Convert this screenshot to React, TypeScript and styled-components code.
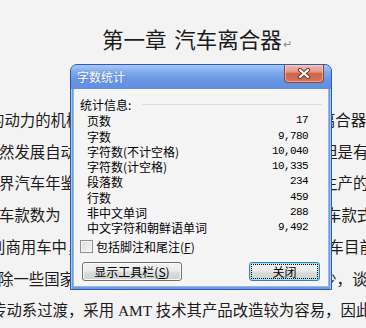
import React from "react";
import styled, { createGlobalStyle } from "styled-components";

const GlobalStyle = createGlobalStyle`
  html, body {
    margin: 0;
    padding: 0;
  }
  body {
    background: #f3f3f3;
    font-family: "Noto Sans CJK SC", sans-serif;
  }
`;

const stats = [
  { label: "页数", value: "17" },
  { label: "字数", value: "9,780" },
  { label: "字符数(不计空格)", value: "10,040" },
  { label: "字符数(计空格)", value: "10,335" },
  { label: "段落数", value: "234" },
  { label: "行数", value: "459" },
  { label: "非中文单词", value: "288" },
  { label: "中文字符和朝鲜语单词", value: "9,492" },
];

const lines = [
  { indent: -11, text: "的动力的机械，在其传动系统中都必须装有一个  离合器" },
  { indent: -1, text: "然发展自动变速器的技术已经相当成熟和完善，但是有" },
  { indent: -1, text: "界汽车年鉴》的统计，世界各大汽车公司目前所生产的" },
  { indent: -1, text: "车款数为　2158 种，其中装有各类自动变速器的车款式" },
  { indent: -10, text: "别商用车中，自动变速器的装车率更高。而我国汽车目前" },
  { indent: -2, text: "除一些国家装备率较高外，我国轿车上的应用很少，谈到" },
  { indent: -9, text: "传动系过渡，采用 AMT 技术其产品改造较为容易，因此" },
];

export default function App() {
  return (
    <Page>
      <GlobalStyle />
      <Doc>
        <Heading>
          第一章 汽车离合器<Mark>↵</Mark>
        </Heading>
        {lines.map((l, i) => (
          <Line key={i} $indent={l.indent}>
            {l.text}
          </Line>
        ))}
      </Doc>

      <Window>
        <TitleBar>
          <Title>字数统计</Title>
          <CloseButton aria-label="关闭">
            <svg width="14" height="11" viewBox="0 0 14 11">
              <path d="M3 2 L11 9 M11 2 L3 9" stroke="#6b3327" strokeWidth="4.2" strokeLinecap="round" />
              <path d="M3 2 L11 9 M11 2 L3 9" stroke="#fff" strokeWidth="2.2" strokeLinecap="round" />
            </svg>
          </CloseButton>
        </TitleBar>
        <Body>
          <GroupHeader>
            <span>统计信息:</span>
            <Rule />
          </GroupHeader>
          <StatList>
            {stats.map((s) => (
              <React.Fragment key={s.label}>
                <StatLabel>{s.label}</StatLabel>
                <StatValue>{s.value}</StatValue>
              </React.Fragment>
            ))}
          </StatList>
          <CheckRow>
            <CheckBox />
            <span>
              包括脚注和尾注(<u>F</u>)
            </span>
          </CheckRow>
          <ButtonRow>
            <Button $width={100}>
              显示工具栏(<u>S</u>)
            </Button>
            <Button $width={71} $default>
              <FocusRing>关闭</FocusRing>
            </Button>
          </ButtonRow>
        </Body>
      </Window>
    </Page>
  );
}

const Page = styled.div`
  position: relative;
  width: 366px;
  height: 328px;
  overflow: hidden;
  background: #f3f3f3;
`;

const Doc = styled.div`
  padding-top: 23px;
  font-family: "Liberation Serif", "Noto Sans CJK SC", serif;
  color: #1b1b1b;
`;

const Heading = styled.h1`
  margin: 0 0 46px 102px;
  font-family: "Noto Sans CJK SC", sans-serif;
  font-size: 21.5px;
  font-weight: 400;
  line-height: 32px;
  word-spacing: 3px;
  white-space: nowrap;
`;

const Mark = styled.span`
  font-size: 11px;
  color: #8a8a8a;
  margin-left: 1px;
`;

const Line = styled.p<{ $indent: number }>`
  margin: 0 0 0 ${(p) => p.$indent}px;
  font-size: 15.4px;
  line-height: 31.7px;
  white-space: pre;
`;

const Window = styled.div`
  position: absolute;
  left: 70px;
  top: 64px;
  width: 262px;
  height: 226px;
  box-sizing: border-box;
  display: flex;
  flex-direction: column;
  border: 1px solid #2c58b0;
  border-radius: 7px 7px 0 0;
  background: #6b9be4;
  padding: 0 2px 2px;
  font-family: "Noto Sans CJK SC", sans-serif;
  font-size: 12px;
  color: #000;
  box-shadow: inset 1px 0 0 #a9c6f0, inset -1px 0 0 #a9c6f0;
`;

const TitleBar = styled.div`
  height: 24px;
  margin: 0 -2px;
  padding: 0 7px 0 6px;
  display: flex;
  align-items: flex-start;
  justify-content: space-between;
  border-radius: 6px 6px 0 0;
  background: linear-gradient(#a8c8f3 0%, #7eaaec 30%, #6897e3 60%, #5f8fe0 100%);
`;

const Title = styled.span`
  color: #fff;
  font-size: 12px;
  line-height: 23px;
  text-shadow: 0 0 2px rgba(30, 60, 130, 0.35);
`;

const CloseButton = styled.button`
  width: 40px;
  height: 18px;
  padding: 0;
  margin: 0;
  display: flex;
  align-items: center;
  justify-content: center;
  border: 1px solid #8f4434;
  border-top: none;
  border-radius: 0 0 4px 4px;
  background: linear-gradient(#efbcae 0%, #e39a86 40%, #cf6249 52%, #d57459 100%);
  box-shadow: inset 0 0 0 1px rgba(255, 220, 210, 0.5);
`;

const Body = styled.div`
  flex: 1;
  display: flex;
  flex-direction: column;
  padding: 7.5px 6px 0;
  background: #f5f5f5;
  border: 1px solid #9cb6e2;
  border-top: none;
`;

const GroupHeader = styled.div`
  display: flex;
  align-items: center;
  height: 15.3px;
  margin-bottom: 1.5px;
  line-height: 15.3px;
`;

const Rule = styled.div`
  flex: 1;
  height: 1px;
  margin-left: 11px;
  background: #d5dde4;
`;

const StatList = styled.div`
  display: grid;
  grid-template-columns: 1fr auto;
  padding: 0 14px 0 7px;
  line-height: 15.3px;
`;

const StatLabel = styled.span`
  white-space: nowrap;
`;

const StatValue = styled.span`
  font-family: "Liberation Mono", monospace;
  font-size: 11px;
  letter-spacing: -0.6px;
  text-align: right;
`;

const CheckRow = styled.label`
  display: flex;
  align-items: center;
  gap: 3px;
  height: 15px;
  margin-top: 3.7px;
  line-height: 15px;
`;

const CheckBox = styled.span`
  width: 13px;
  height: 13px;
  box-sizing: border-box;
  border: 1px solid #8e8f8f;
  background: linear-gradient(135deg, #dcdcdc, #f6f6f6);
  box-shadow: inset 0 0 0 1px #f4f4f4;
`;

const ButtonRow = styled.div`
  display: flex;
  justify-content: space-between;
  margin-top: 7.5px;
  padding: 0 2px;
`;

const Button = styled.button<{ $width: number; $default?: boolean }>`
  width: ${(p) => p.$width}px;
  height: 19px;
  padding: 0;
  display: flex;
  align-items: center;
  justify-content: center;
  font-family: "Noto Sans CJK SC", sans-serif;
  font-size: 12px;
  color: #000;
  border: 1px solid ${(p) => (p.$default ? "#3c7fb1" : "#707070")};
  border-radius: 3px;
  background: linear-gradient(#f2f2f2 0%, #ebebeb 48%, #dddddd 52%, #cfcfcf 100%);
  box-shadow: inset 0 0 0 1px ${(p) => (p.$default ? "#9fe0fb" : "#fbfbfb")};
`;

const FocusRing = styled.span`
  align-self: stretch;
  flex: 1;
  margin: 2px;
  display: flex;
  align-items: center;
  justify-content: center;
  outline: 1px dotted #000;
`;
